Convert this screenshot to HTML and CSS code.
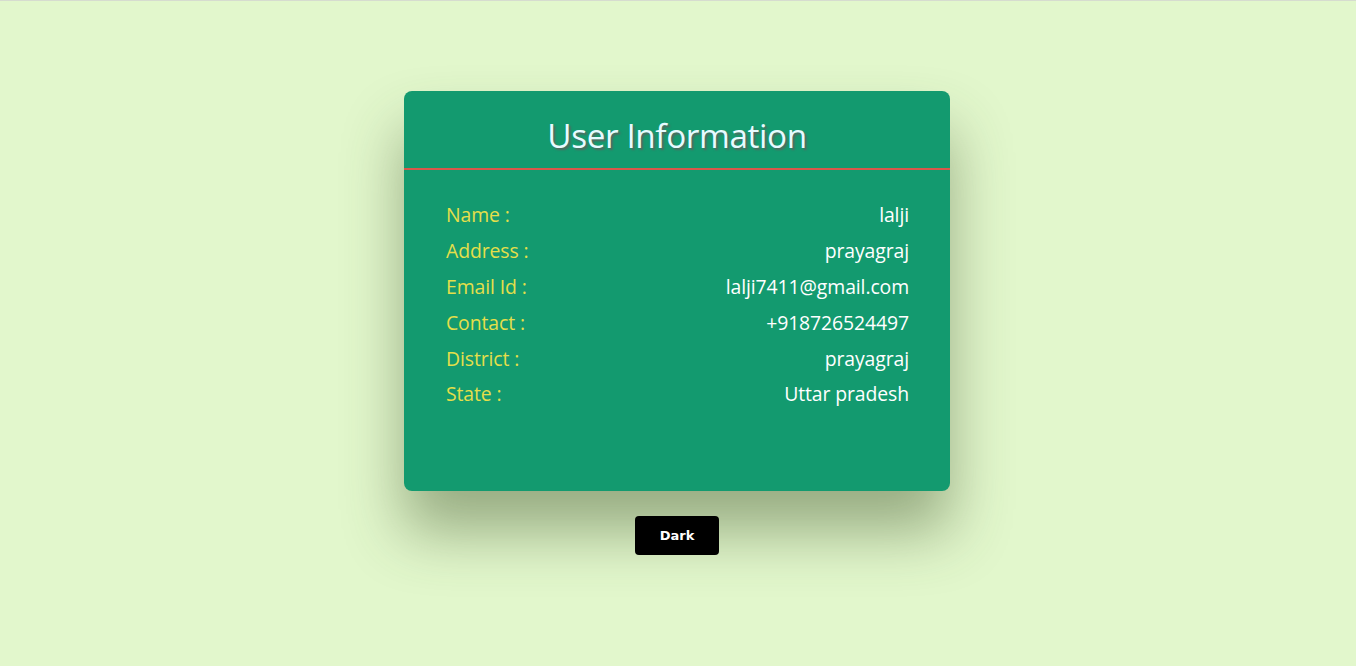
FILE: index.html
```html
<!DOCTYPE html>
<html>
<head>
<meta charset="utf-8">
<link rel="stylesheet" href="styles.css">
</head>
<body>
<div class="page">
  <div class="card">
    <div class="card-head">
      <h1 class="title">User Information</h1>
    </div>
    <div class="card-body">
      <div class="row"><span class="label">Name :</span><span class="value">lalji</span></div>
      <div class="row"><span class="label">Address :</span><span class="value">prayagraj</span></div>
      <div class="row"><span class="label">Email Id :</span><span class="value">lalji7411@gmail.com</span></div>
      <div class="row"><span class="label">Contact :</span><span class="value">+918726524497</span></div>
      <div class="row"><span class="label">District :</span><span class="value">prayagraj</span></div>
      <div class="row"><span class="label">State :</span><span class="value">Uttar pradesh</span></div>
    </div>
  </div>
  <button class="toggle">Dark</button>
</div>
</body>
</html>
```
FILE: styles.css
```css
html, body {
  margin: 0;
  padding: 0;
}
body {
  background: #e2f7cc;
  border-top: 1px solid #d6dccf;
  height: 665px;
  overflow: hidden;
  font-family: "Open Sans", "Noto Sans", sans-serif;
}
.page {
  display: flex;
  flex-direction: column;
  align-items: center;
  padding-top: 90px;
  padding-right: 2px;
}
.card {
  width: 546px;
  height: 400px;
  background: #139a6f;
  border-radius: 8px;
  box-shadow: 0 40px 60px rgba(60, 80, 40, 0.45);
  box-sizing: border-box;
}
.card-head {
  height: 77px;
  border-bottom: 2px solid #d9574a;
  display: flex;
  align-items: center;
  justify-content: center;
}
.title {
  margin: 0;
  font-size: 33.3px;
  font-weight: 500;
  letter-spacing: -0.4px;
  color: #e6fbff;
  text-shadow: 2px 2px 2px #56665f;
  padding-top: 10px;
}
.card-body {
  padding: 27px 41px 0 42px;
  display: flex;
  flex-direction: column;
}
.row {
  display: flex;
  justify-content: space-between;
  height: 35.8px;
  align-items: center;
  font-size: 19.4px;
  letter-spacing: -0.1px;
}
.label {
  color: #e5df4a;
}
.value {
  color: #ffffff;
}
.toggle {
  margin-top: 25px;
  width: 84px;
  height: 39px;
  background: #000;
  color: #fff;
  border: none;
  border-radius: 4px;
  font-family: "DejaVu Sans", sans-serif;
  font-weight: 700;
  font-size: 13px;
  cursor: pointer;
}
```
